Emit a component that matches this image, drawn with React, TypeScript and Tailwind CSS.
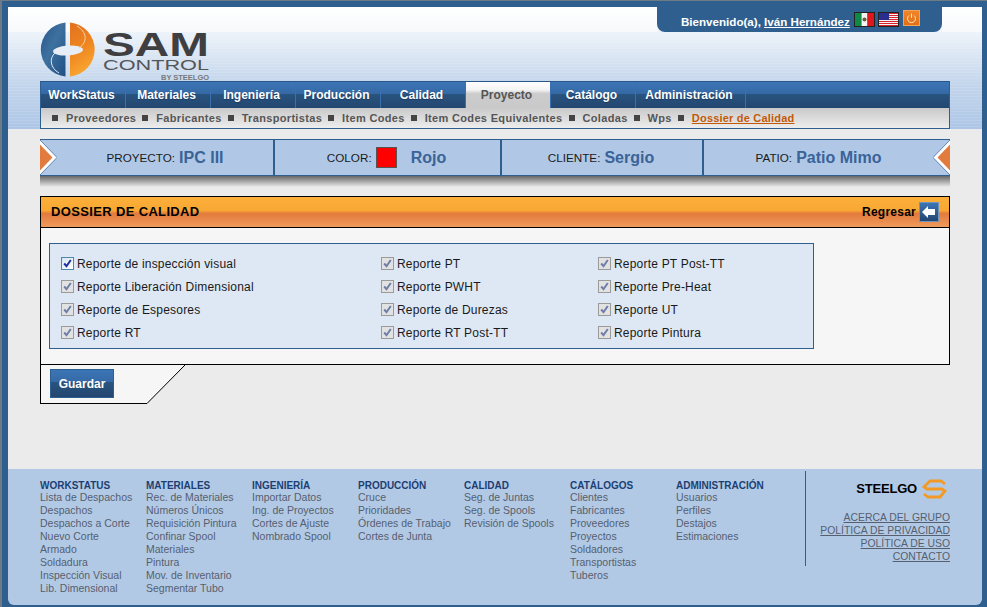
import React from 'react';

const tabs = ['WorkStatus', 'Materiales', 'Ingeniería', 'Producción', 'Calidad', 'Proyecto', 'Catálogo', 'Administración'];
const subTabs = ['Proveedores', 'Fabricantes', 'Transportistas', 'Item Codes', 'Item Codes Equivalentes', 'Coladas', 'Wps'];

const checks = [
  'Reporte de inspección visual', 'Reporte PT', 'Reporte PT Post-TT',
  'Reporte Liberación Dimensional', 'Reporte PWHT', 'Reporte Pre-Heat',
  'Reporte de Espesores', 'Reporte de Durezas', 'Reporte UT',
  'Reporte RT', 'Reporte RT Post-TT', 'Reporte Pintura',
];

const footerCols = [
  { title: 'WORKSTATUS', links: ['Lista de Despachos', 'Despachos', 'Despachos a Corte', 'Nuevo Corte', 'Armado', 'Soldadura', 'Inspección Visual', 'Lib. Dimensional'] },
  { title: 'MATERIALES', links: ['Rec. de Materiales', 'Números Únicos', 'Requisición Pintura', 'Confinar Spool', 'Materiales', 'Pintura', 'Mov. de Inventario', 'Segmentar Tubo'] },
  { title: 'INGENIERÍA', links: ['Importar Datos', 'Ing. de Proyectos', 'Cortes de Ajuste', 'Nombrado Spool'] },
  { title: 'PRODUCCIÓN', links: ['Cruce', 'Prioridades', 'Órdenes de Trabajo', 'Cortes de Junta'] },
  { title: 'CALIDAD', links: ['Seg. de Juntas', 'Seg. de Spools', 'Revisión de Spools'] },
  { title: 'CATÁLOGOS', links: ['Clientes', 'Fabricantes', 'Proveedores', 'Proyectos', 'Soldadores', 'Transportistas', 'Tuberos'] },
  { title: 'ADMINISTRACIÓN', links: ['Usuarios', 'Perfiles', 'Destajos', 'Estimaciones'] },
];

const SamLogo = () => (
  <svg width="172" height="60" viewBox="0 0 172 60" className="block">
    <defs>
      <linearGradient id="blueHalf" x1="0" y1="0" x2="1" y2="1">
        <stop offset="0" stopColor="#24548c" />
        <stop offset="0.45" stopColor="#3f719f" />
        <stop offset="1" stopColor="#1f4f85" />
      </linearGradient>
      <linearGradient id="orangeHalf" x1="0" y1="0" x2="0.3" y2="1">
        <stop offset="0" stopColor="#e2701f" />
        <stop offset="0.55" stopColor="#ee861f" />
        <stop offset="1" stopColor="#f8a531" />
      </linearGradient>
    </defs>
    <path d="M25.5 0.6 A27 27 0 0 0 25.5 54.4 Z" fill="url(#blueHalf)" />
    <path d="M30 0.6 A27 27 0 0 1 30 54.4 Z" fill="url(#orangeHalf)" />
    <ellipse cx="28" cy="28.5" rx="15" ry="5" transform="rotate(-4 28 28.5)" fill="#e6edf7" />
    <path d="M15 31 C9 36 10 46 19 51" stroke="#dfe8f2" strokeWidth="1" fill="none" />
    <path d="M37 4 C47 10 48 20 39 26" stroke="#f7d2a8" strokeWidth="1" fill="none" />
    <text x="63" y="34" textLength="106" lengthAdjust="spacingAndGlyphs" fontFamily="Liberation Sans, sans-serif" fontWeight="700" fontSize="33" fill="#3f3f41">SAM</text>
    <text x="63" y="48" textLength="106" lengthAdjust="spacingAndGlyphs" fontFamily="Liberation Sans, sans-serif" fontSize="14" fill="#555658">CONTROL</text>
    <text x="121" y="58" textLength="48" lengthAdjust="spacingAndGlyphs" fontFamily="Liberation Sans, sans-serif" fontWeight="700" fontSize="8" fill="#77787a">BY STEELGO</text>
  </svg>
);

const Flags = () => (
  <div className="flex items-start gap-[3px] ml-[4px] -mt-[2px]">
    <svg width="21" height="15" viewBox="0 0 21 15" className="mt-[2px]">
      <rect width="21" height="15" fill="#222" />
      <rect x="1" y="1" width="6.5" height="13" fill="#0f8a45" />
      <rect x="7.5" y="1" width="6" height="13" fill="#f4f4f4" />
      <rect x="13.5" y="1" width="6.5" height="13" fill="#e0161d" />
      <circle cx="10.5" cy="7.5" r="2" fill="#6d5a3a" />
    </svg>
    <svg width="21" height="15" viewBox="0 0 21 15" className="mt-[2px]">
      <rect width="21" height="15" fill="#222" />
      <rect x="1" y="1" width="19" height="13" fill="#f4f4f4" />
      {[1, 3, 5, 7, 9, 11, 13].map(y => (
        <rect key={y} x="1" y={y} width="19" height="1" fill="#d8232a" />
      ))}
      <rect x="1" y="1" width="10" height="7" fill="#2a2f8f" />
    </svg>
    <span className="ml-px w-[17px] h-[16px] bg-[linear-gradient(#f0852a,#e56f12)] border border-[#f3a45c] flex items-center justify-center">
      <svg width="11" height="11" viewBox="0 0 11 11" fill="none" stroke="#fde6c8" strokeWidth="1">
        <path d="M3 2.5 A4 4 0 1 0 8 2.5" />
        <path d="M5.5 0.5 V5" />
      </svg>
    </span>
  </div>
);

const Arrow = ({ flip }: { flip?: boolean }) => (
  <svg width="17" height="35" viewBox="0 0 17 35" className={`shrink-0 ${flip ? '-scale-x-100' : ''}`}>
    <path d="M0 0 L17 17.5 L0 35 Z" fill="#fff" />
    <path d="M0 4.5 L12.5 17.5 L0 30.5 Z" fill="#e27c3e" />
    <path d="M0 0 L17 17.5 L0 35" fill="none" stroke="#2f5f8f" strokeWidth="0.7" />
  </svg>
);

const CheckBox = ({ active }: { active: boolean }) => (
  <span className={`w-[13px] h-[13px] shrink-0 border flex items-center justify-center ${active ? 'border-[#4f86ad] bg-[linear-gradient(135deg,#d5e6f2,#ffffff)]' : 'border-[#9a9a9a] bg-[#e2e2e2]'}`}>
    <svg width="9" height="9" viewBox="0 0 9 9" fill="none" stroke={active ? '#1c2f9c' : '#6f7ea8'} strokeWidth="2">
      <path d="M1.2 4.5 L3.5 7.2 L7.8 1" />
    </svg>
  </span>
);

export default function App() {
  return (
    <div className="w-[987px] h-[607px] overflow-hidden bg-[#2f5f8f] border-l-2 border-t border-[#6e7a86] pl-[6px] pt-[6px] pr-[5px] pb-[2px] font-['Liberation_Sans',Arial,sans-serif]">
      <div className="h-full flex flex-col">
        {/* cabecera */}
        <div className="h-[122px] shrink-0 relative bg-[repeating-linear-gradient(transparent_0_2px,rgba(255,255,255,0.1)_2px_3px),linear-gradient(#ffffff,#e9f0f8_25%,#c4d6ec_62%,#adc6e6)]">
          <div className="h-[25px] flex">
            <div className="w-[649px] rounded-tl-[10px] rounded-tr-[8px] bg-[linear-gradient(#ffffff,#f7f9fc)]"></div>
            <div className="w-[285px] bg-[#2f5f8f] rounded-b-[8px] flex items-center pl-6 text-white text-[11.6px] font-bold">
              <span className="whitespace-nowrap mt-[5px]">Bienvenido(a), <span className="underline">Iván Hernández</span></span>
              <Flags />
            </div>
            <div className="flex-1 bg-[linear-gradient(#ffffff,#f7f9fc)] rounded-tl-[8px] rounded-tr-[10px]"></div>
          </div>
          <div className="absolute left-[32px] top-[15px]">
            <SamLogo />
          </div>
          {/* menu */}
          <div className="absolute left-[32px] top-[74px] w-[910px] h-[48px] border-x border-[#2f5f8f]">
            <div className="h-[27px] flex border-t border-[#2a5688] bg-[linear-gradient(#3c75b5,#3569a6_45%,#29547f_46%,#234670)]">
              {tabs.map(tab => (
                <div
                  key={tab}
                  className={`w-[85px] last:w-[110px] shrink-0 pr-[3px] flex items-center justify-center text-[12px] font-bold border-r border-[#3a70ad] ${tab === 'Proyecto' ? 'bg-[linear-gradient(#ffffff,#f4f4f4_30%,#cccccc_45%,#c9c9c9)] text-[#555]' : 'text-white [text-shadow:0_1px_1px_#1b3a60]'}`}
                >
                  {tab}
                </div>
              ))}
            </div>
            <div className="h-[21px] flex items-center pl-[11px] text-[11px] font-bold text-[#555] border-b border-[#2f5f8f] bg-[linear-gradient(#c9c9c9,#ededed)]">
              {subTabs.map(item => (
                <React.Fragment key={item}>
                  <span className="w-[6px] h-[6px] bg-[#444] mr-[8px]"></span>
                  <span className="mr-[6px] whitespace-nowrap tracking-[0.33px]">{item}</span>
                </React.Fragment>
              ))}
              <span className="w-[6px] h-[6px] bg-[#444] mr-[8px]"></span>
              <span className="text-[#c25a08] underline tracking-[0.2px]">Dossier de Calidad</span>
            </div>
          </div>
        </div>

        {/* contenido */}
        <div className="flex-1 bg-[#ebebeb] pl-[32px] pr-[32px] pt-[10px]">
          <div className="h-[37px] flex items-center bg-[#b0c8e6] border-y border-[#2f5f8f] text-[11.7px] text-[#1a1a1a]">
            <Arrow />
            <div className="w-[218px] h-full flex items-center justify-center gap-1 border-r-2 border-[#2f5f8f]">
              PROYECTO: <span className="text-[16px] font-bold text-[#3a6398]">IPC III</span>
            </div>
            <div className="w-[227px] h-full pr-[2px] flex items-center justify-center border-r-2 border-[#2f5f8f]">
              COLOR:
              <span className="w-[21px] h-[21px] bg-[#f00] border border-[#555] mx-[4px]"></span>
              <span className="text-[16px] font-bold text-[#3a6398] ml-[10px]">Rojo</span>
            </div>
            <div className="w-[202px] h-full pr-[2px] flex items-center justify-center gap-1 border-r-2 border-[#2f5f8f]">
              CLIENTE: <span className="text-[16px] font-bold text-[#3a6398]">Sergio</span>
            </div>
            <div className="flex-1 h-full flex items-center justify-center gap-1">
              PATIO: <span className="text-[16px] font-bold text-[#3a6398]">Patio Mimo</span>
            </div>
            <Arrow flip />
          </div>
          <div className="h-[11px] bg-[linear-gradient(#666,#ebebeb)]"></div>

          <div className="mt-[9px] h-[169px] border border-black bg-[#f6f6f6]">
            <div className="h-[31px] flex items-center justify-between pl-[10px] pr-[10px] border-b border-black bg-[linear-gradient(#fcb03b,#f8a733_45%,#e27b3c_55%,#ee9a5c)]">
              <span className="text-[13px] font-bold text-black tracking-[0.35px]">DOSSIER DE CALIDAD</span>
              <div className="flex items-center gap-[3px]">
                <span className="text-[12px] font-bold text-black tracking-[0.25px]">Regresar</span>
                <span className="w-[20px] h-[20px] bg-[linear-gradient(#3c75b5,#234670)] border border-[#6f93bd] flex items-center justify-center">
                  <svg width="14" height="12" viewBox="0 0 14 12" fill="#fff">
                    <path d="M0 6 L6 0 L6 3 L13 3 L13 9 L6 9 L6 12 Z" />
                  </svg>
                </span>
              </div>
            </div>
            <div className="ml-[8px] mt-[15px] w-[765px] h-[106px] border border-[#2f5f8f] bg-[#dee8f4] pl-[11px] pt-[8px] grid grid-cols-[320px_217px_1fr] auto-rows-[23px] text-[12px] text-[#1a1a1a] tracking-[0.2px]">
              {checks.map((label, idx) => (
                <div key={label} className="flex items-center gap-[3px]">
                  <CheckBox active={idx === 0} />
                  <span className="whitespace-nowrap">{label}</span>
                </div>
              ))}
            </div>
          </div>

          <div className="flex">
            <div className="w-[107px] h-[39px] border-l border-b border-black bg-[#f6f6f6] pl-[9px] pt-[4px]">
              <div className="w-[64px] h-[29px] flex items-center justify-center border border-[#2f5f8f] text-[12px] font-bold text-white bg-[linear-gradient(#3c75b5,#3569a6_45%,#29547f_46%,#234670)]">
                Guardar
              </div>
            </div>
            <svg width="39" height="39" viewBox="0 0 39 39" className="block">
              <path d="M0 0 H38 L0 38 Z" fill="#f6f6f6" />
              <path d="M38 0 L0 38.5" stroke="#000" strokeWidth="1" fill="none" />
            </svg>
          </div>
        </div>

        {/* pie */}
        <div className="h-[136px] shrink-0 bg-[#b2c9e6] rounded-b-[6px] pl-[32px] flex">
          <div className="flex pt-[11px]">
            {footerCols.map(col => (
              <div key={col.title} className="w-[106px] text-[10.5px] leading-[13px] whitespace-nowrap">
                <div className="font-bold text-[10px] leading-[11px] text-[#1c3f73]">{col.title}</div>
                {col.links.map(link => (
                  <div key={link} className="text-[#565f6e]">{link}</div>
                ))}
              </div>
            ))}
          </div>
          <div className="ml-[23px] mt-[2px] w-px h-[95px] bg-[#2f5f8f]"></div>
          <div className="w-[144px] flex flex-col items-end pt-[10px]">
            <div className="flex items-center gap-[5px] h-[20px] mr-[3px]">
              <span className="text-[13px] font-bold text-black tracking-[-0.2px]">STEELGO</span>
              <svg width="25" height="20" viewBox="0 0 25 20" fill="none" stroke="#f39a24" strokeWidth="2.8">
                <path d="M23 5 L19 2 H8 L2 8 L5 10 H20 L23 12 L18 18 H6 L2 15" />
              </svg>
            </div>
            <div className="mt-[12px] flex flex-col items-end text-[10.4px] leading-[13px] text-[#565f6e] underline">
              <span>ACERCA DEL GRUPO</span>
              <span>POLÍTICA DE PRIVACIDAD</span>
              <span>POLÍTICA DE USO</span>
              <span>CONTACTO</span>
            </div>
          </div>
        </div>
      </div>
    </div>
  );
}
